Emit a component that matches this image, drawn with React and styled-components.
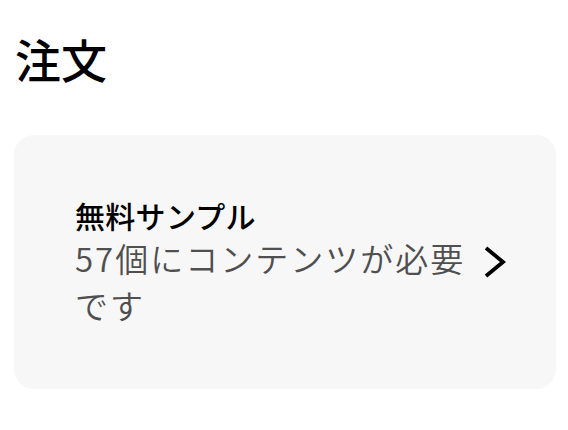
import React from "react";
import styled, { createGlobalStyle } from "styled-components";

const GlobalStyle = createGlobalStyle`
  html, body { margin: 0; padding: 0; background: #ffffff; }
  body { font-family: "Noto Sans CJK JP", "Noto Sans", sans-serif; }
`;

const Page = styled.div`
  width: 568px;
  height: 430px;
  box-sizing: border-box;
  padding: 25px 12px 0 14px;
  display: flex;
  flex-direction: column;
`;

const Heading = styled.h1`
  margin: 0 0 0 1px;
  font-size: 46px;
  font-weight: 500;
  line-height: 66px;
  color: #000;
`;

const Card = styled.button`
  margin-top: 44px;
  height: 254px;
  border: none;
  border-radius: 20px;
  background: #f7f7f7;
  display: flex;
  align-items: center;
  gap: 10px;
  padding: 0 44px 0 61px;
  text-align: left;
  font-family: inherit;
  cursor: pointer;
`;

const TextCol = styled.div`
  flex: 1;
  display: flex;
  flex-direction: column;
`;

const Title = styled.div`
  font-size: 30px;
  font-weight: 500;
  letter-spacing: 0.3px;
  line-height: 40px;
  color: #000;
`;

const Desc = styled.div`
  font-size: 33px;
  font-weight: 350;
  letter-spacing: 2px;
  line-height: 47px;
  color: #4f4f4f;
`;

const Chevron = styled.svg`
  flex: none;
  width: 32px;
  height: 36px;
`;

export default function App() {
  return (
    <>
      <GlobalStyle />
      <Page>
        <Heading>注文</Heading>
        <Card>
          <TextCol>
            <Title>無料サンプル</Title>
            <Desc>57個にコンテンツが必要です</Desc>
          </TextCol>
          <Chevron viewBox="0 0 32 36">
            <path d="M6 4 L23 18 L6 32" fill="none" stroke="#000" strokeWidth="3.8" />
          </Chevron>
        </Card>
      </Page>
    </>
  );
}
